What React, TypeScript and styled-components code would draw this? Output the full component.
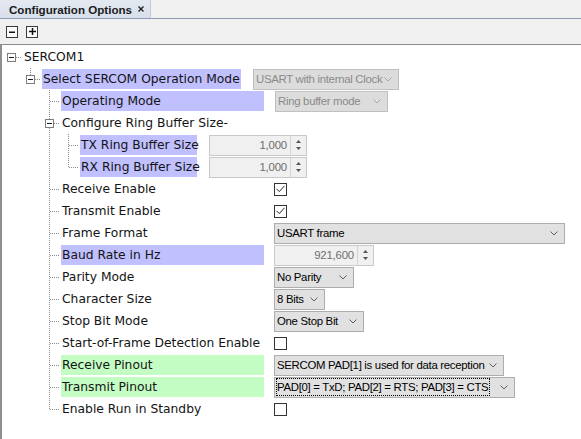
import React from 'react';
import styled, { createGlobalStyle } from 'styled-components';

const GlobalStyle = createGlobalStyle`
  html, body { margin: 0; padding: 0; height: 100%; background: #ffffff; }
  #root { height: 100%; }
  body { font-family: "DejaVu Sans", Verdana, sans-serif; }
`;

const Window = styled.div`
  display: flex;
  flex-direction: column;
  height: 100vh;
  width: 100%;
  overflow: hidden;
`;

const TabBar = styled.div`
  display: flex;
  height: 18px;
  background: #f0f0f0;
  border-bottom: 1px solid #8e9eb2;
`;

const Tab = styled.div`
  display: flex;
  align-items: center;
  width: 151px;
  box-sizing: border-box;
  padding-left: 9px;
  background: linear-gradient(#e4e9f1, #d7dfea);
  border-right: 1px solid #c3ccd8;
  font: bold 11.6px "Liberation Sans", Arial, sans-serif;
  color: #1b1b1b;
`;

const TabTitle = styled.span`
  flex: 1;
  white-space: nowrap;
`;

const TabClose = styled.span`
  display: flex;
  margin-right: 6px;
`;

const Toolbar = styled.div`
  display: flex;
  align-items: center;
  gap: 8px;
  height: 25px;
  padding-left: 6px;
  background: #f0f0f0;
  border-bottom: 1px solid #8c8c8c;
`;

const ToolButton = styled.span`
  display: flex;
  align-items: center;
  justify-content: center;
  width: 12px;
  height: 12px;
  box-sizing: border-box;
  border: 1px solid #3a3a3a;
  background: #fbfbfb;
`;

const TreePanel = styled.div`
  flex: 1;
  border-left: 2px solid #8f8f8f;
  padding-top: 1px;
  background: #ffffff;
`;

const TreeRow = styled.div`
  display: flex;
  align-items: center;
  height: 22px;
`;

const GuideCell = styled.svg`
  flex: 0 0 19px;
  width: 19px;
  height: 22px;
  display: block;
`;

const Label = styled.span<{ $hl?: 'blue' | 'green'; $w?: number }>`
  display: inline-flex;
  align-items: center;
  height: 20px;
  box-sizing: border-box;
  margin-left: 2px;
  padding-left: 1px;
  width: ${(p) => (p.$w ? `${p.$w}px` : 'auto')};
  background: ${(p) => (p.$hl === 'blue' ? '#c0c0ff' : p.$hl === 'green' ? '#c4fdc4' : 'transparent')};
  white-space: nowrap;
  font-size: 12.3px;
  color: #141414;
`;

const ValueSlot = styled.div<{ $gap: number }>`
  display: flex;
  align-items: center;
  margin-left: ${(p) => p.$gap}px;
`;

const Combo = styled.div<{ $w: number; $disabled?: boolean }>`
  display: flex;
  align-items: center;
  box-sizing: border-box;
  width: ${(p) => p.$w}px;
  height: 21px;
  padding-left: 2px;
  border: 1px solid ${(p) => (p.$disabled ? '#c0c0c0' : '#adadad')};
  background: ${(p) => (p.$disabled ? '#dcdcdc' : '#e1e1e1')};
  color: ${(p) => (p.$disabled ? '#8a8a8a' : '#000')};
  font: 11.4px "Liberation Sans", Arial, sans-serif;
  letter-spacing: -0.3px;
`;

const ComboText = styled.span<{ $focus?: boolean }>`
  white-space: nowrap;
  padding: 2px 1px 2px 0;
  outline: ${(p) => (p.$focus ? '1px dotted #000' : 'none')};
  outline-offset: 0;
`;

const Chevron = styled.svg`
  margin-left: auto;
  margin-right: 6px;
  width: 8px;
  height: 5px;
  flex: 0 0 8px;
`;

const Spinner = styled.div<{ $w: number }>`
  display: flex;
  box-sizing: border-box;
  width: ${(p) => p.$w}px;
  height: 21px;
  border: 1px solid #c9c9c9;
  background: #f0f0f0;
  color: #6d6d6d;
  font: 11.4px "Liberation Sans", Arial, sans-serif;
  letter-spacing: -0.2px;
`;

const SpinValue = styled.span`
  flex: 1;
  text-align: right;
  padding-right: 3px;
  line-height: 19px;
`;

const SpinButtons = styled.div`
  display: flex;
  flex-direction: column;
  align-items: center;
  justify-content: center;
  gap: 4px;
  width: 15px;
  border-left: 1px solid #d4d4d4;
`;

const CheckBox = styled.span`
  display: inline-flex;
  align-items: center;
  justify-content: center;
  width: 13px;
  height: 13px;
  box-sizing: border-box;
  border: 1px solid #333333;
  background: #ffffff;
`;

type Value =
  | { kind: 'combo'; text: string; width: number; disabled?: boolean; focus?: boolean }
  | { kind: 'spin'; text: string; width: number }
  | { kind: 'check'; checked: boolean };

type TreeNode = {
  label: string;
  hl?: 'blue' | 'green';
  labelWidth?: number;
  gap?: number;
  value?: Value;
  children?: TreeNode[];
};

const combo = (text: string, width: number, extra: Partial<{ disabled: boolean; focus: boolean }> = {}): Value => ({
  kind: 'combo',
  text,
  width,
  ...extra,
});

const tree: TreeNode[] = [
  {
    label: 'SERCOM1',
    children: [
      {
        label: 'Select SERCOM Operation Mode',
        hl: 'blue',
        labelWidth: 199,
        gap: 12,
        value: combo('USART with internal Clock', 146, { disabled: true }),
        children: [
          { label: 'Operating Mode', hl: 'blue', gap: 11, value: combo('Ring buffer mode', 113, { disabled: true }) },
          {
            label: 'Configure Ring Buffer Size-',
            children: [
              { label: 'TX Ring Buffer Size', hl: 'blue', labelWidth: 117, gap: 12, value: { kind: 'spin', text: '1,000', width: 98 } },
              { label: 'RX Ring Buffer Size', hl: 'blue', labelWidth: 117, gap: 12, value: { kind: 'spin', text: '1,000', width: 98 } },
            ],
          },
          { label: 'Receive Enable', value: { kind: 'check', checked: true } },
          { label: 'Transmit Enable', value: { kind: 'check', checked: true } },
          { label: 'Frame Format', value: combo('USART frame', 291) },
          { label: 'Baud Rate in Hz', hl: 'blue', value: { kind: 'spin', text: '921,600', width: 100 } },
          { label: 'Parity Mode', value: combo('No Parity', 80) },
          { label: 'Character Size', value: combo('8 Bits', 51) },
          { label: 'Stop Bit Mode', value: combo('One Stop Bit', 90) },
          { label: 'Start-of-Frame Detection Enable', value: { kind: 'check', checked: false } },
          { label: 'Receive Pinout', hl: 'green', value: combo('SERCOM PAD[1] is used for data reception', 230) },
          {
            label: 'Transmit Pinout',
            hl: 'green',
            value: combo('PAD[0] = TxD; PAD[2] = RTS; PAD[3] = CTS', 241, { focus: true }),
          },
          { label: 'Enable Run in Standby', value: { kind: 'check', checked: false } },
        ],
      },
    ],
  },
];

type FlatRow = { node: TreeNode; level: number; last: boolean; ancestorsLast: boolean[] };

function flatten(nodes: TreeNode[], level: number, ancestorsLast: boolean[], out: FlatRow[]) {
  nodes.forEach((n, i) => {
    const last = i === nodes.length - 1;
    out.push({ node: n, level, last, ancestorsLast });
    if (n.children) flatten(n.children, level + 1, [...ancestorsLast, last], out);
  });
  return out;
}

const DOT = { stroke: '#8c8c8c', strokeWidth: 1, strokeDasharray: '1 1', shapeRendering: 'crispEdges' as const };

function Guide({ pipe, node, hasParent, last, expander }: { pipe?: boolean; node?: boolean; hasParent?: boolean; last?: boolean; expander?: boolean }) {
  return (
    <GuideCell viewBox="0 0 19 22">
      {pipe && <line x1={9.5} y1={0} x2={9.5} y2={22} {...DOT} />}
      {node && hasParent && <line x1={9.5} y1={0} x2={9.5} y2={last ? 12 : 22} {...DOT} />}
      {node && <line x1={10} y1={11.5} x2={19} y2={11.5} {...DOT} />}
      {node && expander && (
        <g shapeRendering="crispEdges">
          <rect x={5.5} y={7.5} width={8} height={8} fill="#fff" stroke="#7d7d7d" />
          <line x1={7} y1={11.5} x2={12} y2={11.5} stroke="#1a1a1a" />
        </g>
      )}
    </GuideCell>
  );
}

function ChevronIcon({ disabled }: { disabled?: boolean }) {
  return (
    <Chevron viewBox="0 0 8 5">
      <polyline points="0.5,0.5 4,4 7.5,0.5" fill="none" stroke={disabled ? '#a8a8a8' : '#606060'} strokeWidth={1} />
    </Chevron>
  );
}

function ValueView({ value }: { value: Value }) {
  if (value.kind === 'combo') {
    return (
      <Combo $w={value.width} $disabled={value.disabled}>
        <ComboText $focus={value.focus}>{value.text}</ComboText>
        <ChevronIcon disabled={value.disabled} />
      </Combo>
    );
  }
  if (value.kind === 'spin') {
    return (
      <Spinner $w={value.width}>
        <SpinValue>{value.text}</SpinValue>
        <SpinButtons>
          <svg width="5" height="3" viewBox="0 0 5 3">
            <polygon points="2.5,0 5,3 0,3" fill="#555" />
          </svg>
          <svg width="5" height="3" viewBox="0 0 5 3">
            <polygon points="0,0 5,0 2.5,3" fill="#555" />
          </svg>
        </SpinButtons>
      </Spinner>
    );
  }
  return (
    <CheckBox>
      {value.checked && (
        <svg width="9" height="8" viewBox="0 0 9 8">
          <polyline points="0.5,3.8 3.3,6.6 8.5,0.8" fill="none" stroke="#222" strokeWidth={1} />
        </svg>
      )}
    </CheckBox>
  );
}

function TreeRowView({ row }: { row: FlatRow }) {
  const { node, level, last, ancestorsLast } = row;
  const cells: React.ReactNode[] = [];
  for (let d = 0; d < level; d++) {
    cells.push(<Guide key={d} pipe={d > 0 && !ancestorsLast[d]} />);
  }
  cells.push(<Guide key="own" node hasParent={level > 0} last={last} expander={!!node.children} />);
  const defaultWidth = node.value && level === 2 ? 203 : undefined;
  return (
    <TreeRow>
      {cells}
      <Label $hl={node.hl} $w={node.labelWidth ?? defaultWidth}>
        {node.label}
      </Label>
      {node.value && (
        <ValueSlot $gap={node.gap ?? 10}>
          <ValueView value={node.value} />
        </ValueSlot>
      )}
    </TreeRow>
  );
}

export default function App() {
  const rows = flatten(tree, 0, [], []);
  return (
    <>
      <GlobalStyle />
      <Window>
        <TabBar>
          <Tab>
            <TabTitle>Configuration Options</TabTitle>
            <TabClose>
              <svg width="6" height="6" viewBox="0 0 6 6">
                <path d="M0.5 0.5 L5.5 5.5 M5.5 0.5 L0.5 5.5" stroke="#222" strokeWidth={1.4} />
              </svg>
            </TabClose>
          </Tab>
        </TabBar>
        <Toolbar>
          <ToolButton>
            <svg width="6" height="6" viewBox="0 0 6 6">
              <rect x={0} y={2.5} width={6} height={1.5} fill="#111" />
            </svg>
          </ToolButton>
          <ToolButton>
            <svg width="7" height="7" viewBox="0 0 7 7">
              <rect x={0} y={2.75} width={7} height={1.5} fill="#111" />
              <rect x={2.75} y={0} width={1.5} height={7} fill="#111" />
            </svg>
          </ToolButton>
        </Toolbar>
        <TreePanel>
          {rows.map((r, i) => (
            <TreeRowView key={i} row={r} />
          ))}
        </TreePanel>
      </Window>
    </>
  );
}
